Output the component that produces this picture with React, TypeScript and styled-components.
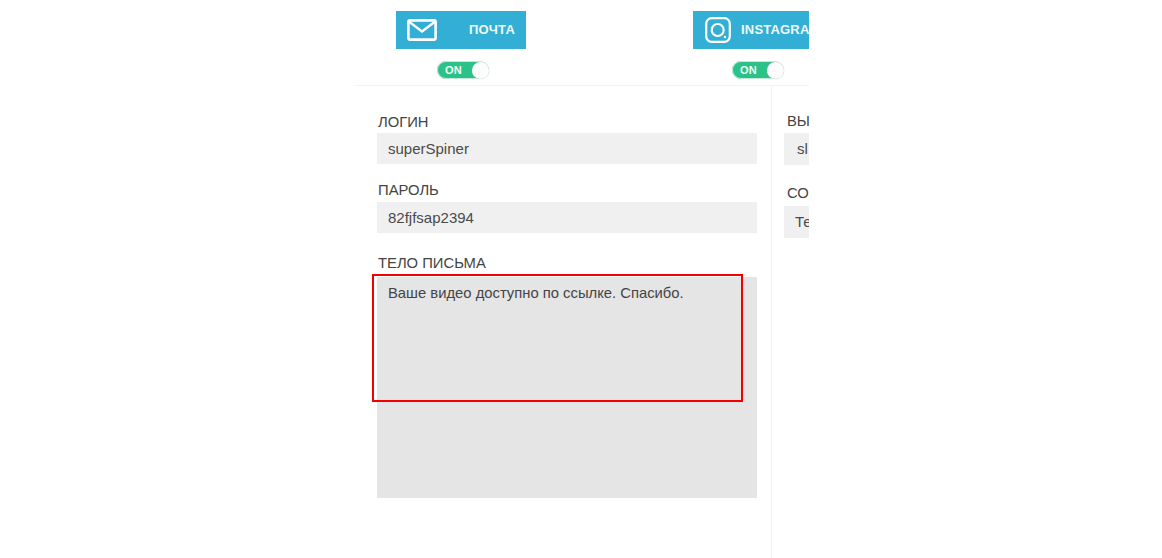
import React from "react";
import styled, { createGlobalStyle } from "styled-components";

const Global = createGlobalStyle`
  html, body { margin: 0; padding: 0; background: #fff; }
  body { font-family: "Liberation Sans", Arial, sans-serif; color: #3a3a3a; }
`;

const Page = styled.div`
  width: 1162px;
  height: 558px;
  display: flex;
  justify-content: flex-start;
  padding-left: 354px;
  box-sizing: border-box;
  overflow: hidden;
`;

const Panel = styled.div`
  position: relative;
  width: 455px;
  height: 558px;
  overflow: hidden;
  display: flex;
  flex-direction: column;
`;

const Channels = styled.div`
  height: 85px;
  flex: none;
  display: flex;
  padding-left: 42px;
  gap: 167px;
  border-bottom: 1px solid #f3f3f3;
`;

const Channel = styled.div<{ $toggleShift: number }>`
  flex: none;
  width: 130px;
  padding-top: 11px;
  display: flex;
  flex-direction: column;
  align-items: flex-start;
  gap: 13px;
  & > :last-child { margin-left: ${(p) => p.$toggleShift}px; }
`;

const Tile = styled.div<{ $wide?: boolean }>`
  width: ${(p) => (p.$wide ? "170px" : "130px")};
  height: 38px;
  background: #33afd6;
  color: #fff;
  display: flex;
  align-items: center;
  padding: 0 11px 0 ${(p) => (p.$wide ? "12px" : "11px")};
  box-sizing: border-box;
  gap: 10px;
  flex: none;
`;

const TileLabel = styled.span<{ $push?: boolean }>`
  font-size: 13px;
  font-weight: 700;
  letter-spacing: 0.2px;
  line-height: 14px;
  margin-bottom: 1px;
  white-space: nowrap;
  color: #eef9fc;
  margin-left: ${(p) => (p.$push ? "auto" : "0")};
`;

const Toggle = styled.div`
  width: 52px;
  height: 18px;
  margin-top: -1px;
  box-sizing: border-box;
  border-radius: 9px;
  background: linear-gradient(to right, #2bc28a 0 80%, #fff 80%);
  box-shadow: inset 0 0 0 1px #c4e8da;
  display: flex;
  align-items: center;
  justify-content: space-between;
  padding-left: 8px;
`;

const ToggleText = styled.span`
  color: #f2fbf7;
  font-size: 11px;
  font-weight: 700;
  letter-spacing: 0.3px;
`;

const Knob = styled.span`
  width: 17px;
  height: 17px;
  border-radius: 50%;
  background: #fbfcfb;
  box-shadow: 0 0 1px #9fb8ae;
  flex: none;
`;

const Body = styled.div`
  flex: 1;
  display: flex;
  min-height: 0;
`;

const MainColumn = styled.div`
  flex: none;
  width: 418px;
  box-sizing: border-box;
  padding: 26px 14px 0 23px;
  border-right: 1px solid #f1f1f1;
`;

const SideColumn = styled.div`
  flex: none;
  width: 200px;
  padding: 25px 0 0 12px;
  box-sizing: border-box;
`;

const Field = styled.div<{ $gap: number }>`
  margin-bottom: ${(p) => p.$gap}px;
`;

const Label = styled.div<{ $side?: boolean; $below?: number }>`
  font-size: 14.8px;
  line-height: 20px;
  height: 21px;
  color: #444;
  margin-left: ${(p) => (p.$side ? "3px" : "1px")};
  margin-bottom: ${(p) => p.$below ?? 0}px;
  white-space: nowrap;
`;

const Value = styled.div<{ $height: number; $side?: boolean }>`
  height: ${(p) => p.$height}px;
  background: #f0f0f0;
  font-size: 15px;
  line-height: ${(p) => p.$height}px;
  padding-left: ${(p) => (p.$side ? "13px" : "11px")};
  color: #4a4a4a;
  white-space: nowrap;
`;

const TextBody = styled.div`
  height: 221px;
  background: #e5e5e5;
  font-size: 14.8px;
  line-height: 20px;
  padding: 6px 11px;
  box-sizing: border-box;
  color: #444;
`;

const Highlight = styled.div`
  position: absolute;
  left: 18px;
  top: 274px;
  width: 371px;
  height: 128px;
  box-sizing: border-box;
  border: 2px solid #f40000;
  pointer-events: none;
`;

const MailIcon = () => (
  <svg width="30" height="22" viewBox="0 0 30 22" fill="none" stroke="#fff" strokeWidth="2.6" strokeLinejoin="round" strokeLinecap="round">
    <rect x="1.4" y="1.4" width="27.2" height="19.2" rx="1.5" />
    <path d="M2.5 3l12.5 9.5L27.5 3" strokeWidth="2.2" />
  </svg>
);

const InstagramIcon = () => (
  <svg width="26" height="26" viewBox="0 0 26 26" fill="none" stroke="#fff" strokeWidth="2.2">
    <rect x="1.2" y="1.2" width="23.6" height="23.6" rx="5.5" />
    <circle cx="12.7" cy="13" r="6" />
    <circle cx="20" cy="20" r="1.2" fill="#fff" stroke="none" />
  </svg>
);

export default function App() {
  return (
    <Page>
      <Global />
      <Panel>
        <Channels>
          <Channel $toggleShift={41}>
            <Tile>
              <MailIcon />
              <TileLabel $push>ПОЧТА</TileLabel>
            </Tile>
            <Toggle>
              <ToggleText>ON</ToggleText>
              <Knob />
            </Toggle>
          </Channel>
          <Channel $toggleShift={39}>
            <Tile $wide>
              <InstagramIcon />
              <TileLabel>INSTAGRAM</TileLabel>
            </Tile>
            <Toggle>
              <ToggleText>ON</ToggleText>
              <Knob />
            </Toggle>
          </Channel>
        </Channels>
        <Body>
          <MainColumn>
            <Field $gap={16}>
              <Label>ЛОГИН</Label>
              <Value $height={31}>superSpiner</Value>
            </Field>
            <Field $gap={20}>
              <Label $below={1}>ПАРОЛЬ</Label>
              <Value $height={31}>82fjfsap2394</Value>
            </Field>
            <Field $gap={0}>
              <Label $below={3}>ТЕЛО ПИСЬМА</Label>
              <TextBody>Ваше видео доступно по ссылке. Спасибо.</TextBody>
            </Field>
          </MainColumn>
          <SideColumn>
            <Field $gap={18}>
              <Label $side $below={1}>ВЫБОР</Label>
              <Value $side $height={32}>sl</Value>
            </Field>
            <Field $gap={0}>
              <Label $side $below={2}>СОБЩЕНИЕ</Label>
              <Value $height={32}>Текст</Value>
            </Field>
          </SideColumn>
        </Body>
        <Highlight />
      </Panel>
    </Page>
  );
}
